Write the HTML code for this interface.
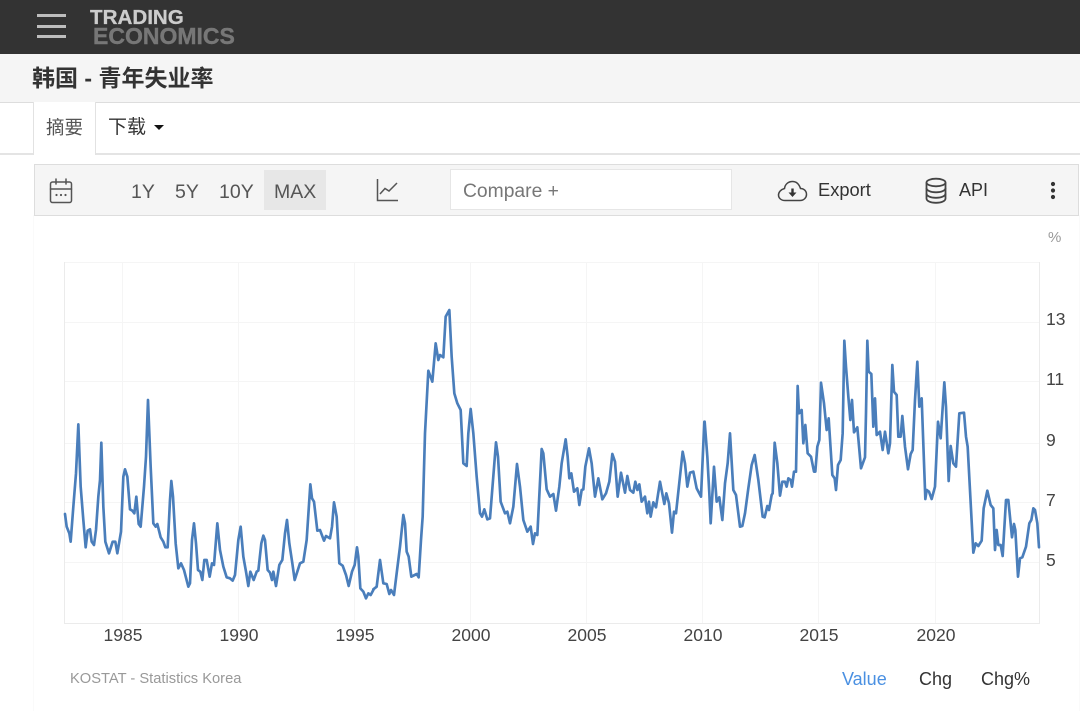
<!DOCTYPE html>
<html lang="zh"><head><meta charset="utf-8"><title>韩国 - 青年失业率</title>
<style>
html,body{margin:0;padding:0;background:#fff}
body{width:1080px;height:711px;position:relative;overflow:hidden;font-family:"Liberation Sans","Noto Sans CJK SC",sans-serif;color:#333}
.a{position:absolute;white-space:nowrap}
.tb{font-size:19.5px;line-height:22px;top:181px;color:#555}
.y{font-size:17.5px;line-height:20px;left:1046px;color:#444}
.x{font-size:17.5px;line-height:20px;top:625px;color:#444;width:60px;text-align:center}
.f{font-size:18px;line-height:22px;top:668px;color:#333}
</style></head><body>
<div class="a" style="left:33px;top:215px;width:1045px;height:496px;border-left:1px solid #fafafa;border-right:1px solid #fafafa"></div>
<div class="a" style="left:0;top:0;width:1080px;height:54px;background:#333"></div>
<div class="a" style="left:37px;top:14px;width:29px;height:3px;background:#bdbdbd"></div>
<div class="a" style="left:37px;top:24.500px;width:29px;height:3px;background:#bdbdbd"></div>
<div class="a" style="left:37px;top:34.500px;width:29px;height:3px;background:#bdbdbd"></div>
<div class="a" style="left:93px;top:22px;font-size:23px;font-weight:bold;line-height:28px;color:#777;-webkit-text-stroke:.4px #777">ECONOMICS</div>
<div class="a" style="left:90px;top:6px;font-size:20.600px;font-weight:bold;line-height:24px;color:#ccc;-webkit-text-stroke:.3px #ccc">TRADING</div>

<div class="a" style="left:0;top:54px;width:1080px;height:48px;background:#f5f5f5;border-bottom:1px solid #ddd"></div>
<div class="a" style="left:32px;top:62px;font-size:23px;font-weight:bold;line-height:32px;color:#333">韩国 - 青年失业率</div>

<div class="a" style="left:0;top:153px;width:1080px;height:2px;background:#e4e4e4"></div>
<div class="a" style="left:33px;top:102px;width:61px;height:53px;background:#fff;border-left:1px solid #e2e2e2;border-right:1px solid #e2e2e2"></div>
<div class="a" style="left:46px;top:115px;font-size:18.500px;line-height:26px;color:#555">摘要</div>
<div class="a" style="left:108px;top:115px;font-size:19px;line-height:26px;color:#333">下载</div>
<div class="a" style="left:154px;top:125px;width:0;height:0;border-left:5px solid transparent;border-right:5px solid transparent;border-top:5px solid #111"></div>

<div class="a" style="left:34px;top:164px;width:1043px;height:50px;background:#f5f5f5;border:1px solid #ddd"></div>
<div class="a" style="left:264px;top:170px;width:62px;height:40px;background:#e7e7e7"></div>
<div class="a tb" style="left:131px">1Y</div>
<div class="a tb" style="left:175px">5Y</div>
<div class="a tb" style="left:219px">10Y</div>
<div class="a tb" style="left:274px">MAX</div>
<div class="a" style="left:450px;top:169px;width:280px;height:39px;background:#fff;border:1px solid #e6e6e6"></div>
<div class="a" style="left:463px;top:181px;font-size:19.300px;line-height:22px;color:#777">Compare +</div>
<div class="a" style="left:818px;top:179px;font-size:18.300px;line-height:22px;color:#333">Export</div>
<div class="a" style="left:959px;top:179px;font-size:18px;line-height:22px;color:#333">API</div>
<div class="a" style="left:1048px;top:228px;font-size:15px;line-height:20px;color:#999">%</div>

<svg class="a" style="left:0;top:0" width="1080" height="711" viewBox="0 0 1080 711" fill="none">
<!-- calendar -->
<g stroke="#555" stroke-width="1.500" stroke-linecap="round">
<rect x="50.500" y="182" width="21" height="20.500" rx="2"/>
<path d="M50.500 189H71.500M56 179V184M66 179V184"/>
</g>
<g fill="#555"><circle cx="56.500" cy="195" r="1.100"/><circle cx="61" cy="195" r="1.100"/><circle cx="65.500" cy="195" r="1.100"/></g>
<!-- line chart icon -->
<path d="M377.500 179V200.500H398" stroke="#555" stroke-width="1.500"/>
<path d="M380 194L385 188.500L389 191L397 183" stroke="#555" stroke-width="1.500"/>
<!-- cloud -->
<path d="M785 200.500H800C804 200.500 806.500 197.500 806.500 194.500C806.500 191 804 188.500 800.500 188.500C799 184 796 181.500 792.500 181.500C788 181.500 785 184.500 784.500 188.500C781 189.500 778.500 192 778.500 195C778.500 198 781 200.500 785 200.500Z" stroke="#444" stroke-width="1.500"/>
<path d="M792.500 188.500V193" stroke="#333" stroke-width="2.400"/>
<path d="M788.500 192.500H796.500L792.500 197Z" fill="#333"/>
<!-- database -->
<g stroke="#444" stroke-width="1.800">
<ellipse cx="936" cy="182.500" rx="9.500" ry="3.800"/>
<path d="M926.500 182.500V198.500C926.500 201 930.500 202.800 936 202.800C941.500 202.800 945.500 201 945.500 198.500V182.500"/>
<path d="M926.500 188C926.500 190.500 930.500 192.300 936 192.300C941.500 192.300 945.500 190.500 945.500 188"/>
<path d="M926.500 193.500C926.500 196 930.500 197.800 936 197.800C941.500 197.800 945.500 196 945.500 193.500"/>
</g>
<g fill="#333"><circle cx="1053" cy="184" r="2.100"/><circle cx="1053" cy="190.500" r="2.100"/><circle cx="1053" cy="197" r="2.100"/></g>

<!-- grid -->
<g stroke="#f5f5f5" stroke-width="1">
<path d="M65 262.500H1040M65 322.500H1040M65 381.500H1040M65 443.500H1040M65 502.500H1040M65 562.500H1040"/>
<path d="M122.500 262V623M238.500 262V623M354.500 262V623M470.500 262V623M586.500 262V623M702.500 262V623M818.500 262V623M935.500 262V623"/>
</g>
<g stroke="#ebebeb" stroke-width="1"><path d="M64.500 262V623.500H1040M1039.500 262V623"/></g>
<!-- blue series -->
<g stroke="#4a7ebb" stroke-width="8" stroke-linejoin="round" stroke-linecap="round">
<polyline transform="translate(40 300) scale(.33333)" points="75,642 80,680 88,700 92,725 100,620 108,520 115,373 122,560 130,660 137,742 143,692 150,688 155,725 162,735 168,690 175,590 180,540 184,428 190,620 196,725 207,760 218,725 226,725 232,760 243,695 250,530 255,508 262,530 270,628 277,632 283,640 289,590 296,672 302,680 312,560 318,470 324,300 332,500 340,670 347,680 352,672 362,712 370,725 376,742 383,742 390,600 394,543 399,590 407,730 415,805 423,790 432,810 445,860 450,850 456,720 462,670 468,730 474,810 481,815 487,840 493,780 500,780 509,830 516,790 522,795 532,670 540,750 550,800 560,832 570,835 578,842 585,825 595,720 602,680 610,770 618,815 625,858 631,815 641,840 650,815 655,812 664,730 670,707 675,720 683,810 690,818 696,840 700,815 708,858 718,795 727,780 735,700 741,660 748,730 757,790 764,840 780,790 790,785 800,720 811,553 816,595 822,605 832,692 840,690 852,722 858,708 870,715 876,680 882,607 890,650 898,790 908,797 918,825 926,858 936,815 944,795 951,742 955,770 961,865 970,875 978,895 985,880 992,885 1000,870"/>
<polyline transform="translate(370 300) scale(.33333)" points="10,868 20,860 30,780 40,850 50,852 58,882 63,870 72,885 80,820 90,740 100,645 105,670 110,755 116,770 124,830 134,825 140,822 146,832 153,720 158,650 165,400 175,212 187,245 197,130 205,180 210,165 220,172 227,50 238,30 245,170 253,280 262,310 272,330 280,490 290,498 295,400 302,327 310,400 320,530 330,640 336,650 343,628 352,658 360,655 378,427 384,470 392,605 405,640 412,635 420,670 430,620 441,492 450,560 460,660 472,695 482,680 489,732 495,700 502,705 515,447 520,460 530,568 540,590 550,582 558,632 568,560 575,490 587,418 593,470 598,535 604,520 612,575 622,565 628,615 635,570 640,568 646,500 657,445 665,490 675,590 685,535 697,598 708,580 718,545 727,462 735,485 743,590 753,518 765,578 772,528 780,570 790,578 796,545 802,570 808,553 815,605 825,590 832,640 837,605 842,650 850,607 858,622 870,545 883,612 889,580 897,610 906,698 912,635 918,640 938,455 945,490 952,560 960,518 970,515 980,565 993,590 1003,365"/>
<polyline transform="translate(700 300) scale(.33333)" points="14,365 22,470 28,580 32,670 42,500 50,605 58,592 67,660 75,550 83,490 90,400 100,570 108,585 120,680 127,678 135,640 145,565 155,495 164,465 175,540 188,650 194,652 202,618 207,630 215,585 218,580 224,428 232,490 240,587 247,545 255,545 260,560 265,535 272,540 276,560 282,515 288,515 293,258 297,340 305,330 310,430 316,375 323,460 333,470 342,515 346,515 352,440 358,420 363,248 372,310 380,390 386,355 397,525 404,535 408,570 414,495 422,480 428,400 433,122 438,200 445,290 451,360 456,300 462,397 472,382 483,505 495,472 498,340 502,122 506,215 514,222 520,380 525,295 530,405 540,395 548,450 555,395 565,460 570,430 577,195 582,275 590,285 595,410 602,410 607,348 615,440 624,508 632,462 638,450 645,300 652,185 658,320 665,295 676,597 680,570 687,575 695,597 705,560 714,365 722,415 733,247 738,320 746,543 752,438 760,490 768,500 778,340 792,338 798,410 803,440 820,758 827,730 835,738 845,722 851,625 862,572 872,615 880,625 885,750 890,690 895,735 902,735 908,768 918,600 925,600 936,712 942,672 946,690 954,830 960,775 967,772 978,740 988,670 994,660 1000,625 1005,630 1012,670 1017,742"/>
</g>
</svg>

<div class="a y" style="top:309px">13</div>
<div class="a y" style="top:369px">11</div>
<div class="a y" style="top:430px">9</div>
<div class="a y" style="top:490px">7</div>
<div class="a y" style="top:550px">5</div>

<div class="a x" style="left:93px">1985</div>
<div class="a x" style="left:209px">1990</div>
<div class="a x" style="left:325px">1995</div>
<div class="a x" style="left:441px">2000</div>
<div class="a x" style="left:557px">2005</div>
<div class="a x" style="left:673px">2010</div>
<div class="a x" style="left:789px">2015</div>
<div class="a x" style="left:906px">2020</div>

<div class="a" style="left:70px;top:670px;font-size:14.700px;line-height:18px;color:#999">KOSTAT - Statistics Korea</div>
<div class="a f" style="left:842px;color:#4a90e2">Value</div>
<div class="a f" style="left:919px">Chg</div>
<div class="a f" style="left:981px">Chg%</div>
</body></html>
